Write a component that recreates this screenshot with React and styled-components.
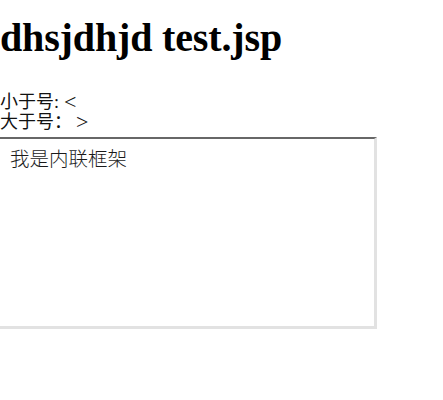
import React from "react";
import styled, { createGlobalStyle } from "styled-components";

const Global = createGlobalStyle`
  html, body {
    margin: 0;
    padding: 0;
    background: #ffffff;
  }
  body {
    font-family: "Liberation Serif", "Noto Sans CJK SC", serif;
    color: #000000;
    overflow: hidden;
  }
`;

const Page = styled.div`
  display: flex;
  flex-direction: column;
  align-items: flex-start;
`;

const Title = styled.h1`
  margin: 15px 0 31px 0;
  font-family: "Liberation Serif", serif;
  font-size: 40px;
  font-weight: bold;
  line-height: 46px;
  white-space: nowrap;
  letter-spacing: -0.15px;
`;

const Line = styled.div`
  display: flex;
  align-items: center;
  font-family: "Liberation Serif", "Noto Sans CJK SC", serif;
  font-size: 18px;
  line-height: 20px;
  height: 20px;
  white-space: nowrap;
  color: #111111;
`;

const Sym = styled.span`
  font-family: "Liberation Serif", serif;
  font-size: 22px;
  line-height: 20px;
  margin-left: ${(p) => p.$gap}px;
`;

const Frame = styled.div`
  box-sizing: border-box;
  width: 387px;
  height: 192px;
  margin: 5px 0 0 -10px;
  padding: 8px 18px;
  border-style: solid;
  border-width: 2px 3px 3px 2px;
  border-color: #676767 #e2e2e2 #e2e2e2 #676767;
  background: #ffffff;
`;

const FrameText = styled.p`
  margin: 0;
  font-family: "Noto Sans CJK SC", sans-serif;
  font-size: 19.5px;
  line-height: 22px;
  color: #1a1a1a;
  font-weight: 300;
`;

export default function App() {
  return (
    <Page>
      <Global />
      <Title>dhsjdhjd test.jsp</Title>
      <Line>
        小于号:<Sym $gap={5}>&lt;</Sym>
      </Line>
      <Line>
        大于号：<Sym $gap={4}>&gt;</Sym>
      </Line>
      <Frame>
        <FrameText>我是内联框架</FrameText>
      </Frame>
    </Page>
  );
}
